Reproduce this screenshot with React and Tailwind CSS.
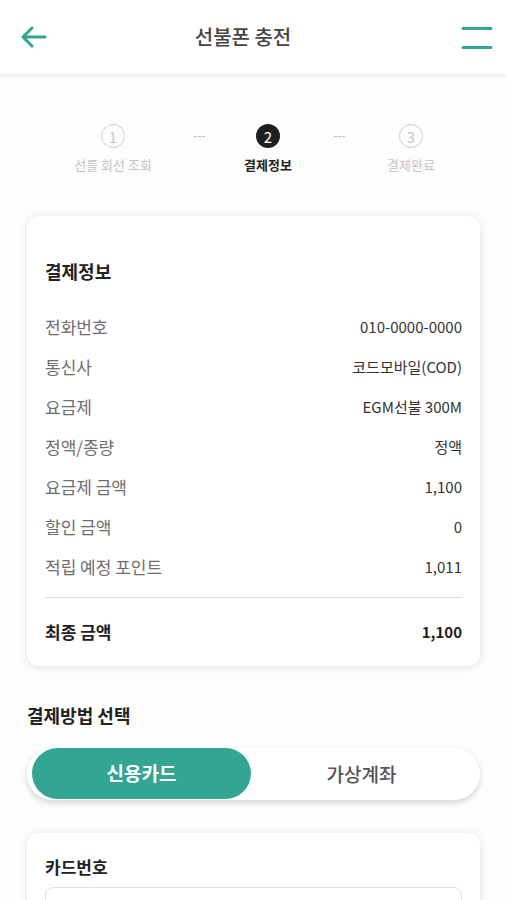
import React from "react";

const TEAL = "#34a593";

function Step({ n, label, active }) {
  return (
    <div className="flex w-[100px] flex-col items-center">
      <div
        className={
          active
            ? "flex h-[24px] w-[24px] items-center justify-center rounded-full bg-[#1e1e1e] text-[15px] leading-none text-white"
            : "flex h-[24px] w-[24px] items-center justify-center rounded-full border border-[#cfcfcf] text-[15px] leading-none text-[#c8c8c8]"
        }
      >
        {n}
      </div>
      <div
        className={
          active
            ? "mt-[8px] whitespace-nowrap text-[13px] font-bold leading-[18px] text-[#222]"
            : "mt-[8px] whitespace-nowrap text-[13px] leading-[18px] text-[#c4c4c4]"
        }
      >
        {label}
      </div>
    </div>
  );
}

function Dots({ w, offset }) {
  return (
    <div className={`flex h-[24px] items-center justify-center ${w} ${offset}`}>
      <div className="flex gap-[1px]">
        <span className="h-[1px] w-[3px] bg-[#bdbdbd]" />
        <span className="h-[1px] w-[3px] bg-[#bdbdbd]" />
        <span className="h-[1px] w-[3px] bg-[#bdbdbd]" />
      </div>
    </div>
  );
}

function Row({ label, value }) {
  return (
    <div className="flex h-[40px] items-center justify-between">
      <span className="text-[17px] text-[#6e6e6e]">{label}</span>
      <span className="text-[15px] text-[#333]">{value}</span>
    </div>
  );
}

export default function App() {
  return (
    <div
      className="min-h-[900px] w-full overflow-hidden bg-[#fdfdfd]"
      style={{ fontFamily: '"Noto Sans CJK KR", "Noto Sans", sans-serif' }}
    >
      {/* Header */}
      <div className="flex h-[74px] items-center justify-between bg-white px-[18px] shadow-[0_2px_4px_rgba(0,0,0,0.08)]">
        <svg width="30" height="24" viewBox="0 0 30 24" fill="none" className="ml-[1px]">
          <path d="M26 12H4M13 3L4 12l9 9" stroke={TEAL} strokeWidth="3" strokeLinecap="round" strokeLinejoin="round" />
        </svg>
        <div className="mr-[24px] text-[20px] font-medium text-[#444]">선불폰 충전</div>
        <svg width="32" height="26" viewBox="0 0 32 26" fill="none" className="mr-[-4px] mt-[2px]">
          <path d="M2 3.5h28M2 22.5h28" stroke={TEAL} strokeWidth="3" strokeLinecap="round" />
        </svg>
      </div>

      {/* Stepper */}
      <div className="mt-[50px] flex pl-[63px]">
        <Step n="1" label="선를 회선 조회" />
        <Dots w="w-[55px]" offset="pl-[18px]" />
        <Step n="2" label="결제정보" active />
        <Dots w="w-[43px]" offset="" />
        <Step n="3" label="결제완료" />
      </div>

      {/* Payment info card */}
      <div className="mx-[27px] mt-[42px] rounded-[12px] bg-white px-[18px] pb-[14px] pt-[43px] shadow-[0_1px_8px_rgba(0,0,0,0.12)]">
        <div className="text-[18px] font-bold leading-[24px] text-[#222]">결제정보</div>
        <div className="mt-[24px]">
          <Row label="전화번호" value="010-0000-0000" />
          <Row label="통신사" value="코드모바일(COD)" />
          <Row label="요금제" value="EGM선불 300M" />
          <Row label="정액/종량" value="정액" />
          <Row label="요금제 금액" value="1,100" />
          <Row label="할인 금액" value="0" />
          <Row label="적립 예정 포인트" value="1,011" />
        </div>
        <div className="mt-[10px] h-[1px] bg-[#dcdcdc]" />
        <div className="mt-[14px] flex h-[40px] items-center justify-between">
          <span className="text-[17px] font-bold text-[#222]">최종 금액</span>
          <span className="text-[15px] font-bold text-[#222]">1,100</span>
        </div>
      </div>

      {/* Payment method */}
      <div className="mx-[27px] mt-[37px] text-[18px] font-bold leading-[24px] text-[#222]">결제방법 선택</div>
      <div className="mx-[27px] mt-[21px] flex h-[52px] rounded-full bg-white pl-[5px] shadow-[0_3px_6px_rgba(0,0,0,0.16)]">
        <div className="flex h-[51px] w-[219px] items-center justify-center rounded-full bg-[#33a593] text-[19px] font-bold text-white">
          신용카드
        </div>
        <div className="flex flex-1 items-center justify-center pr-[8px] text-[19px] font-medium text-[#555]">가상계좌</div>
      </div>

      {/* Card number card */}
      <div className="mx-[27px] mt-[33px] rounded-[12px] bg-white px-[18px] pt-[22px] pb-[40px] shadow-[0_1px_8px_rgba(0,0,0,0.12)]">
        <div className="text-[17px] font-bold leading-[24px] text-[#222]">카드번호</div>
        <div className="mt-[8px] h-[48px] rounded-[8px] border border-[#e2e2e2] bg-white" />
      </div>
    </div>
  );
}
